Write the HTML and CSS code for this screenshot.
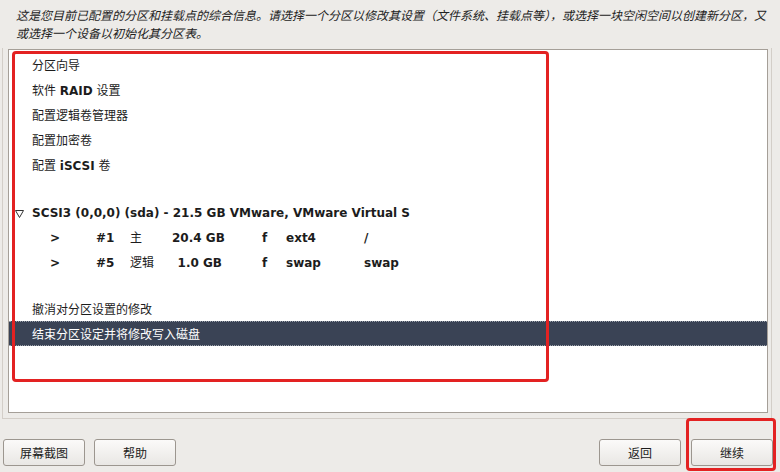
FILE: index.html
```html
<!DOCTYPE html>
<html lang="zh-CN">
<head>
    <meta charset="UTF-8">
    <title>分区</title>
    <link rel="stylesheet" href="styles.css">
</head>
<body>
    <p class="intro">这是您目前已配置的分区和挂载点的综合信息。请选择一个分区以修改其设置（文件系统、挂载点等），或选择一块空闲空间以创建新分区，又<br>或选择一个设备以初始化其分区表。</p>

    <div class="frame">
        <div class="panel">
            <div class="row">分区向导</div>
            <div class="row">软件 <b>RAID</b> 设置</div>
            <div class="row">配置逻辑卷管理器</div>
            <div class="row">配置加密卷</div>
            <div class="row">配置 <b>iSCSI</b> 卷</div>
            <div class="row blank"></div>
            <div class="row disk">
                <svg class="expander" width="9" height="8" viewBox="0 0 9 8"><path d="M0.5 0.5 H8.5 L4.5 7.5 Z" fill="none" stroke="#333" stroke-width="1"/></svg>
                <b class="disk-name">SCSI3 (0,0,0) (sda) - 21.5 GB VMware, VMware Virtual S</b>
            </div>
            <div class="row part">
                <b>&gt;</b><b>#1</b><span>主</span><b class="size">20.4 GB</b><span></span><b>f</b><b>ext4</b><b>/</b>
            </div>
            <div class="row part">
                <b>&gt;</b><b>#5</b><span>逻辑</span><b class="size">1.0 GB</b><span></span><b>f</b><b>swap</b><b>swap</b>
            </div>
            <div class="row blank short"></div>
            <div class="row low">撤消对分区设置的修改</div>
            <div class="row selected">结束分区设定并将修改写入磁盘</div>
        </div>
    </div>

    <div class="footer">
        <div class="btn-group">
            <button class="btn">屏幕截图</button>
            <button class="btn">帮助</button>
        </div>
        <div class="btn-group right">
            <button class="btn">返回</button>
            <button class="btn">继续</button>
        </div>
    </div>

    <!-- annotation boxes drawn over the screenshot -->
    <div class="mark mark-list"></div>
    <div class="mark mark-next"></div>
</body>
</html>
```

FILE: styles.css
```css
html, body {
    margin: 0;
    height: 472px;
    overflow: hidden;
}
body {
    position: relative;
    background-color: #edebe8;
    font-family: "DejaVu Sans", "Noto Sans CJK SC", sans-serif;
    font-size: 12px;
    color: #1c1c1c;
}
.intro {
    margin: 0;
    padding: 7px 0 0 16px;
    height: 41px;
    line-height: 18px;
    font-style: italic;
    color: #222;
    white-space: nowrap;
}
.frame {
    margin-left: 2px;
    width: 760px;
    height: 364px;
    padding: 1px 3px 5px 5px;
    border: 1px solid #d3cec8;
    border-top: none;
}
.panel {
    height: 358px;
    padding-top: 4px;
    background-color: #fff;
    border: 1px solid #a59f98;
}
.row {
    height: 25px;
    line-height: 25px;
    padding-left: 23px;
    white-space: nowrap;
}
.row b {
    font-weight: bold;
}
.row.blank {
    height: 22px;
}
.row.blank.short {
    height: 20px;
}
.row.low {
    line-height: 28px;
}
.disk {
    display: flex;
    align-items: center;
    padding-left: 6px;
}
.expander {
    margin-right: 8px;
}
.disk-name {
    width: 384px;
    overflow: hidden;
}
.part {
    display: grid;
    grid-template-columns: 46px 34px 42px 50px 40px 24px 78px 1fr;
    padding-left: 41px;
}
.part .size {
    text-align: right;
}
.selected {
    background-color: #3a4355;
    color: #fff;
    border-top: 1px dotted #9aa0aa;
    border-bottom: 1px dotted #9aa0aa;
    height: 23px;
    line-height: 26px;
    overflow: hidden;
}
.footer {
    display: flex;
    justify-content: space-between;
    padding: 20px 7px 0 3px;
}
.btn-group {
    display: flex;
    gap: 9px;
}
.btn-group.right {
    gap: 10px;
}
.btn {
    width: 82px;
    height: 27px;
    font-family: "DejaVu Sans", "Noto Sans CJK SC", sans-serif;
    font-size: 12px;
    color: #1c1c1c;
    background: linear-gradient(#fbfaf9, #e9e7e4);
    border: 1px solid #9c968f;
    border-radius: 3px;
    padding: 0;
}
.mark {
    position: absolute;
    border: 3px solid #e32222;
    border-radius: 4px;
    box-sizing: border-box;
}
.mark-list {
    left: 12px;
    top: 51px;
    width: 537px;
    height: 331px;
}
.mark-next {
    left: 686px;
    top: 418px;
    width: 90px;
    height: 53px;
}
```
